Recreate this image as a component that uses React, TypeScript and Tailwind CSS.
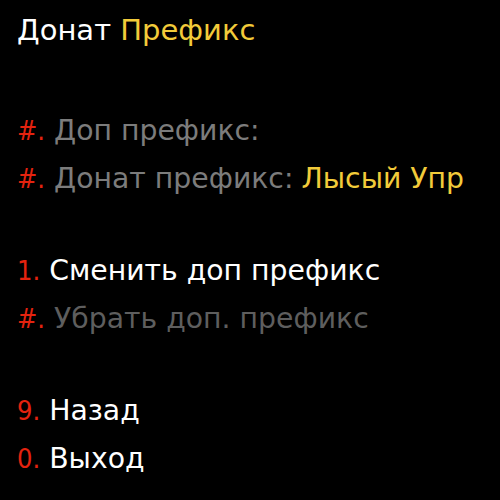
export default function App() {
  const font = { fontFamily: '"DejaVu Sans", sans-serif' };
  const Num = ({ n }: { n: string }) => (
    <span
      className="text-[#e4230f] text-[27px] mr-[9px]"
      style={{ fontFamily: '"Liberation Sans Narrow", "DejaVu Sans Condensed", sans-serif' }}
    >
      {n}.
    </span>
  );
  return (
    <div className="w-[500px] h-[500px] bg-black overflow-hidden pl-[17px] pt-[8px]" style={font}>
      <div className="text-[29px] leading-[44px] text-white">
        Донат <span className="text-[#f2cb3a]">Префикс</span>
      </div>
      <div className="mt-[55px] flex flex-col">
        <div className="h-[48px] leading-[48px] text-[28.3px] text-[#7c7c7c] flex items-baseline">
          <Num n="#" />Доп префикс:
        </div>
        <div className="h-[48px] leading-[48px] text-[28.3px] text-[#7c7c7c] flex items-baseline">
          <Num n="#" />Донат префикс: <span className="text-[#f2cb3a] ml-[8px]">Лысый Упр</span>
        </div>
      </div>
      <div className="mt-[44px] flex flex-col">
        <div className="h-[48px] leading-[48px] text-[28.3px] text-white flex items-baseline">
          <Num n="1" />Сменить доп префикс
        </div>
        <div className="h-[48px] leading-[48px] text-[28.3px] text-[#5e5e5e] flex items-baseline">
          <Num n="#" />Убрать доп. префикс
        </div>
      </div>
      <div className="mt-[44px] flex flex-col">
        <div className="h-[48px] leading-[48px] text-[28.3px] text-white flex items-baseline">
          <Num n="9" />Назад
        </div>
        <div className="h-[48px] leading-[48px] text-[28.3px] text-white flex items-baseline">
          <Num n="0" />Выход
        </div>
      </div>
    </div>
  );
}
